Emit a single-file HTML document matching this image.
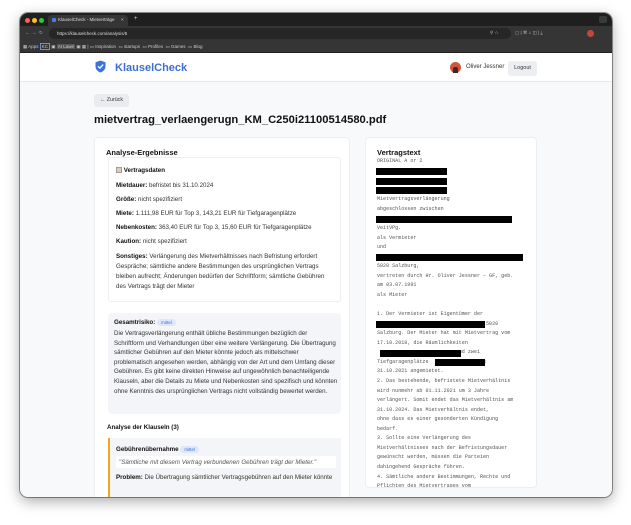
<!DOCTYPE html>
<html><head><meta charset="utf-8"><style>
*{margin:0;padding:0;box-sizing:border-box}
body{width:631px;height:525px;background:#fff;font-family:"Liberation Sans",sans-serif;position:relative;overflow:hidden}
.win{position:absolute;left:20px;top:13px;width:592px;height:484px;border-radius:8px;overflow:hidden;background:#f8f9fb;box-shadow:0 4px 14px rgba(0,0,0,.35),0 0 0 1px rgba(0,0,0,.4)}
.tabs{position:absolute;left:0;top:0;width:100%;height:13px;background:#1f1f1f}
.tb{position:absolute;left:0;top:13px;width:100%;height:15px;background:#353535}
.bm{position:absolute;left:0;top:28px;width:100%;height:12px;background:#353535;border-bottom:1px solid #222}
.dot{position:absolute;top:5px;width:5px;height:5px;border-radius:50%}
.t{position:absolute;color:#ddd;font-size:4.5px;white-space:nowrap}
.page{position:absolute;left:0;top:40px;width:100%;height:444px;background:#f8f9fb}
.hdr{position:absolute;left:0;top:0;width:100%;height:29px;background:#fff;border-bottom:1px solid #e5e7eb}
.a{position:absolute;white-space:nowrap}
.card{position:absolute;background:#fff;border:1px solid #eceef1;border-radius:4px}
.s{font-size:6.2px;color:#333}
.s b{color:#111}
.mono{font-family:"Liberation Mono",monospace;font-size:5.05px;color:#555}
.bar{position:absolute;background:#000;height:7px}
</style></head><body>
<div class="win">
 <div class="tabs">
  <div class="dot" style="left:5px;background:#ff5f57"></div>
  <div class="dot" style="left:12px;background:#febc2e"></div>
  <div class="dot" style="left:19px;background:#28c840"></div>
  <div style="position:absolute;left:28px;top:2px;width:80px;height:11px;background:#353535;border-radius:4px 4px 0 0"></div>
  <div style="position:absolute;left:32px;top:5px;width:4px;height:4px;background:#4a7de0;border-radius:1px"></div>
  <div class="t" style="left:38px;top:4px">KlauselCheck - Mietverträge</div>
  <div class="t" style="left:101px;top:4px">×</div>
  <div class="t" style="left:114px;top:3px;font-size:6px">+</div>
  <div style="position:absolute;left:579px;top:3px;width:8px;height:7px;background:#3a3a3a;border-radius:2px"></div>
 </div>
 <div class="tb">
  <div class="t" style="left:5px;top:4px;color:#aaa">←&nbsp;&nbsp;→&nbsp;&nbsp;↻</div>
  <div style="position:absolute;left:29px;top:2px;width:462px;height:11px;background:#262626;border-radius:6px"></div>
  <div class="t" style="left:37px;top:5px">https://klauselcheck.com/analysis/5</div>
  <div class="t" style="left:470px;top:4px;color:#bbb">⚲ ☆</div>
  <div class="t" style="left:495px;top:4px;color:#bbb">▢ | ⌘ ⌂ ◫ | ⤓</div>
  <div style="position:absolute;left:567px;top:4px;width:7px;height:7px;border-radius:50%;background:#c9453c"></div>
 </div>
 <div class="bm">
  <div class="t" style="left:3px;top:3px;color:#ccc">▦ Apps <span style="border:1px solid #6b8fd8;padding:0 1px">KC</span> ▣ <span style="background:#555;padding:0 1px">AI Lawe</span> ▣ ▦ | ▭ Inspiration &nbsp;▭ startups &nbsp;▭ Profiles &nbsp;▭ Games &nbsp;▭ Blog</div>
 </div>
 <div class="page">
  <div class="hdr">
   <svg class="a" style="left:75px;top:7px" width="11" height="13" viewBox="0 0 11 13"><path d="M5.5 0.5L10.5 2.3V6.2C10.5 9.3 8.4 11.4 5.5 12.5 2.6 11.4 0.5 9.3 0.5 6.2V2.3Z" fill="#3d74d9"/><path d="M3 6.3L4.9 8.1 8.2 4.6" stroke="#fff" stroke-width="1.3" fill="none"/></svg>
   <div class="a" style="left:95px;top:9px;font-size:11px;font-weight:bold;color:#3d6fd0">KlauselCheck</div>
   <div class="a" style="left:430px;top:9px;width:11px;height:11px;border-radius:50%;background:#d4533f"></div>
   <div class="a" style="left:433px;top:14px;width:5px;height:6px;border-radius:2px 2px 0 0;background:#3a2a22"></div>
   <div class="a" style="left:446px;top:11px;font-size:6px;color:#333">Oliver Jessner</div>
   <div class="a" style="left:488px;top:8px;width:29px;height:15px;background:#eceef1;border-radius:3px;font-size:5.5px;color:#333;text-align:center;line-height:15px">Logout</div>
  </div>
  <div class="a" style="left:74px;top:41px;width:35px;height:13px;background:#e9ebee;border-radius:3px;font-size:5.3px;color:#333;text-align:center;line-height:13px">← Zurück</div>
  <div class="a" style="left:74px;top:61px;font-size:11.2px;font-weight:bold;color:#111">mietvertrag_verlaengerugn_KM_C250i21100514580.pdf</div>

  <div class="card" style="left:74px;top:84px;width:256px;height:370px">
   <div class="a" style="left:11px;top:10px;font-size:7.5px;font-weight:bold;color:#111">Analyse-Ergebnisse</div>
   <div class="a" style="left:13px;top:19px;width:233px;height:145px;border:1px solid #eceef1;border-radius:3px"></div>
   <div class="a s" style="left:21px;top:29px"><span style="display:inline-block;width:6px;height:6px;background:#d9cdb8;border:1px solid #a99;vertical-align:-1px"></span> <b>Vertragsdaten</b></div>
   <div class="a s" style="left:21px;top:44px"><b>Mietdauer:</b> befristet bis 31.10.2024</div>
   <div class="a s" style="left:21px;top:58px"><b>Größe:</b> nicht spezifiziert</div>
   <div class="a s" style="left:21px;top:72px"><b>Miete:</b> 1.111,98 EUR für Top 3, 143,21 EUR für Tiefgaragenplätze</div>
   <div class="a s" style="left:21px;top:86px"><b>Nebenkosten:</b> 363,40 EUR für Top 3, 15,60 EUR für Tiefgaragenplätze</div>
   <div class="a s" style="left:21px;top:100px"><b>Kaution:</b> nicht spezifiziert</div>
   <div class="a s" style="left:21px;top:114px;white-space:normal;width:220px;line-height:10px"><b>Sonstiges:</b> Verlängerung des Mietverhältnisses nach Befristung erfordert Gespräche; sämtliche andere Bestimmungen des ursprünglichen Vertrags bleiben aufrecht; Änderungen bedürfen der Schriftform; sämtliche Gebühren des Vertrags trägt der Mieter</div>
   <div class="a" style="left:13px;top:175px;width:233px;height:101px;background:#f4f5f8;border-radius:4px"></div>
   <div class="a s" style="left:19px;top:181px"><b>Gesamtrisiko:</b> <span style="background:#dde8fb;color:#3d6fd0;border-radius:5px;padding:1px 4px;font-size:4.5px">mittel</span></div>
   <div class="a s" style="left:19px;top:191px;white-space:normal;width:224px;line-height:9.6px">Die Vertragsverlängerung enthält übliche Bestimmungen bezüglich der Schriftform und Verhandlungen über eine weitere Verlängerung. Die Übertragung sämtlicher Gebühren auf den Mieter könnte jedoch als mittelschwer problematisch angesehen werden, abhängig von der Art und dem Umfang dieser Gebühren. Es gibt keine direkten Hinweise auf ungewöhnlich benachteiligende Klauseln, aber die Details zu Miete und Nebenkosten sind spezifisch und könnten ohne Kenntnis des ursprünglichen Vertrags nicht vollständig bewertet werden.</div>
   <div class="a s" style="left:12px;top:286px"><b>Analyse der Klauseln (3)</b></div>
   <div class="a" style="left:13px;top:300px;width:233px;height:70px;background:#f4f5f8;border-left:2px solid #f5a524"></div>
   <div class="a s" style="left:21px;top:308px"><b>Gebührenübernahme</b> <span style="background:#dde8fb;color:#3d6fd0;border-radius:5px;padding:1px 4px;font-size:4.5px">mittel</span></div>
   <div class="a" style="left:21px;top:318px;width:220px;height:12px;background:#fff;border-radius:2px"></div>
   <div class="a s" style="left:24px;top:321px;font-style:italic;color:#555">"Sämtliche mit diesem Vertrag verbundenen Gebühren trägt der Mieter."</div>
   <div class="a s" style="left:21px;top:336px"><b>Problem:</b> Die Übertragung sämtlicher Vertragsgebühren auf den Mieter könnte</div>
  </div>

  <div class="card" style="left:345px;top:84px;width:172px;height:351px;overflow:hidden">
   <div class="a" style="left:11px;top:10px;font-size:7.5px;font-weight:bold;color:#111">Vertragstext</div>
   <div class="a mono" style="left:11px;top:19px;line-height:9.56px;white-space:pre">ORIGINAL A or 2



Mietvertragsverlängerung
abgeschlossen zwischen

VeitVPg.
als Vermieter
und

5020 Salzburg,
vertreten durch Hr. Oliver Jessner – GF, geb.
am 03.07.1991
als Mieter

1. Der Vermieter ist Eigentümer der
                                    5020
Salzburg. Der Mieter hat mit Mietvertrag vom
17.10.2018, die Räumlichkeiten
                          und zwei
Tiefgaragenplätze                bis
31.10.2021 angemietet.
2. Das bestehende, befristete Mietverhältnis
wird nunmehr ab 01.11.2021 um 3 Jahre
verlängert. Somit endet das Mietverhältnis am
31.10.2024. Das Mietverhältnis endet,
ohne dass es einer gesonderten Kündigung
bedarf.
3. Sollte eine Verlängerung des
Mietverhältnisses nach der Befristungsdauer
gewünscht werden, müssen die Parteien
dahingehend Gespräche führen.
4. Sämtliche andere Bestimmungen, Rechte und
Pflichten des Mietvertrages vom</div>
   <div class="bar" style="left:10px;top:30px;width:71px"></div>
   <div class="bar" style="left:10px;top:40px;width:71px"></div>
   <div class="bar" style="left:10px;top:49px;width:71px"></div>
   <div class="bar" style="left:10px;top:78px;width:136px"></div>
   <div class="bar" style="left:10px;top:116px;width:147px"></div>
   <div class="bar" style="left:10px;top:183px;width:109px"></div>
   <div class="bar" style="left:14px;top:212px;width:81px"></div>
   <div class="bar" style="left:69px;top:221px;width:50px"></div>
  </div>
 </div>
</div>
</body></html>
